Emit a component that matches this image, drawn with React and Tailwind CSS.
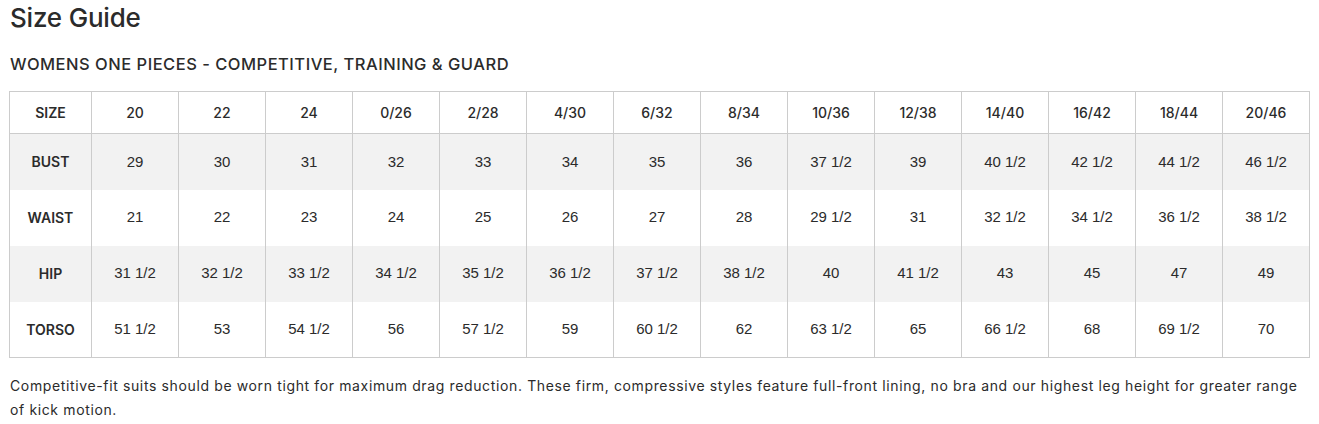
const sizes = ["20", "22", "24", "0/26", "2/28", "4/30", "6/32", "8/34", "10/36", "12/38", "14/40", "16/42", "18/44", "20/46"];

const rows = [
    { label: "BUST", values: ["29", "30", "31", "32", "33", "34", "35", "36", "37 1/2", "39", "40 1/2", "42 1/2", "44 1/2", "46 1/2"] },
    { label: "WAIST", values: ["21", "22", "23", "24", "25", "26", "27", "28", "29 1/2", "31", "32 1/2", "34 1/2", "36 1/2", "38 1/2"] },
    { label: "HIP", values: ["31 1/2", "32 1/2", "33 1/2", "34 1/2", "35 1/2", "36 1/2", "37 1/2", "38 1/2", "40", "41 1/2", "43", "45", "47", "49"] },
    { label: "TORSO", values: ["51 1/2", "53", "54 1/2", "56", "57 1/2", "59", "60 1/2", "62", "63 1/2", "65", "66 1/2", "68", "69 1/2", "70"] },
];

export default function App() {
    return (
        <div className="bg-white px-[9px] pt-[2px] text-[#2b2b2b] font-['Inter',sans-serif]">
            <h1 className="text-[26px] leading-[32px] font-medium ml-px tracking-[-0.2px]">Size Guide</h1>
            <h2 className="mt-[19px] text-[16.5px] leading-[22px] ml-px font-medium tracking-[0.5px]">
                WOMENS ONE PIECES - COMPETITIVE, TRAINING &amp; GUARD
            </h2>
            <table className="mt-[16px] w-full border-collapse border border-[#cccccc] text-[15px] font-['Liberation_Sans',Arial,sans-serif]">
                <thead>
                    <tr className="h-[42px]">
                        <th className="border border-[#cccccc] font-['Inter',sans-serif] text-[14px] font-semibold w-[82px]">SIZE</th>
                        {sizes.map((s) => (
                            <th key={s} className="border border-[#cccccc] font-['Inter',sans-serif] text-[14px] font-medium">
                                {s}
                            </th>
                        ))}
                    </tr>
                </thead>
                <tbody>
                    {rows.map((row, i) => (
                        <tr key={row.label} className={`h-[56px] ${i % 2 === 0 ? "bg-[#f2f2f2]" : "bg-white"}`}>
                            <td className="border-x border-[#cccccc] text-center font-['Inter',sans-serif] text-[14px] font-semibold">
                                {row.label}
                            </td>
                            {row.values.map((v, j) => (
                                <td key={j} className="border-x border-[#cccccc] text-center">
                                    {v}
                                </td>
                            ))}
                        </tr>
                    ))}
                </tbody>
            </table>
            <p className="mt-[16px] text-[14px] leading-[24px] ml-px tracking-[0.63px]">
                Competitive-fit suits should be worn tight for maximum drag reduction. These firm, compressive styles feature full-front lining, no bra and our highest leg height for greater range of kick motion.
            </p>
        </div>
    );
}
